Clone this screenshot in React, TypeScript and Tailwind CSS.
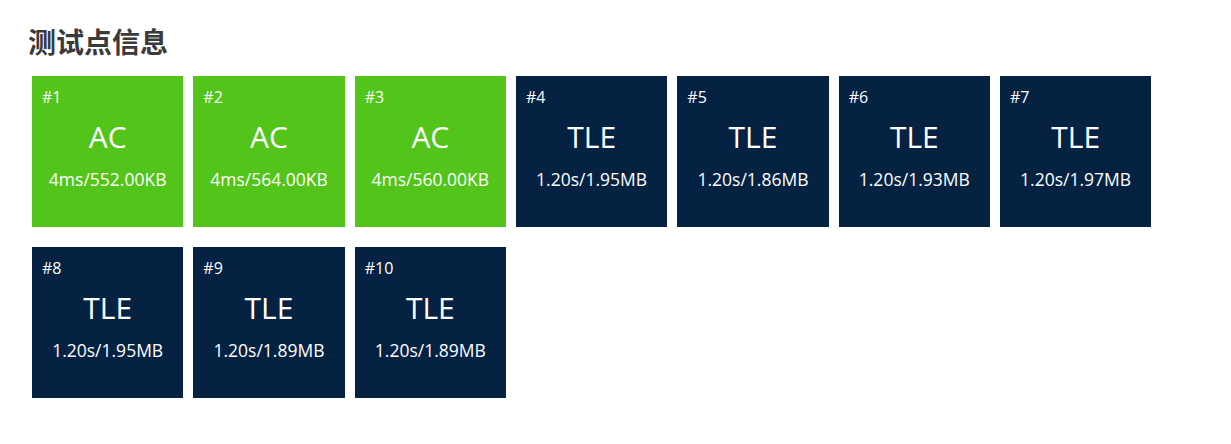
import React from 'react'

type Case = { id: number; status: 'AC' | 'TLE'; time: string; memory: string }

const cases: Case[] = [
  { id: 1, status: 'AC', time: '4ms', memory: '552.00KB' },
  { id: 2, status: 'AC', time: '4ms', memory: '564.00KB' },
  { id: 3, status: 'AC', time: '4ms', memory: '560.00KB' },
  { id: 4, status: 'TLE', time: '1.20s', memory: '1.95MB' },
  { id: 5, status: 'TLE', time: '1.20s', memory: '1.86MB' },
  { id: 6, status: 'TLE', time: '1.20s', memory: '1.93MB' },
  { id: 7, status: 'TLE', time: '1.20s', memory: '1.97MB' },
  { id: 8, status: 'TLE', time: '1.20s', memory: '1.95MB' },
  { id: 9, status: 'TLE', time: '1.20s', memory: '1.89MB' },
  { id: 10, status: 'TLE', time: '1.20s', memory: '1.89MB' },
]

export default function App() {
  return (
    <div className="w-[1231px] h-[444px] bg-white pt-[24px] font-['Open_Sans','Noto_Sans_CJK_SC',sans-serif]">
      <h2 className="pl-[28px] text-[28px] leading-[36px] font-bold text-[#3a3a3a]">测试点信息</h2>
      <div className="mt-[16px] pl-[32px] flex flex-wrap gap-x-[10px] gap-y-[20px] w-[1180px]">
        {cases.map((c) => (
          <div
            key={c.id}
            className={
              'w-[151.33px] h-[151px] text-white flex flex-col ' +
              (c.status === 'AC' ? 'bg-[#52c41a]' : 'bg-[#052242]')
            }
          >
            <div className="pl-[10px] pt-[11px] text-[16px] leading-[20px]">#{c.id}</div>
            <div className="mt-[12px] text-center text-[30px] leading-[36px]">{c.status}</div>
            <div className="mt-[13px] text-center text-[17.5px] leading-[22px]">
              {c.time}/{c.memory}
            </div>
          </div>
        ))}
      </div>
    </div>
  )
}
